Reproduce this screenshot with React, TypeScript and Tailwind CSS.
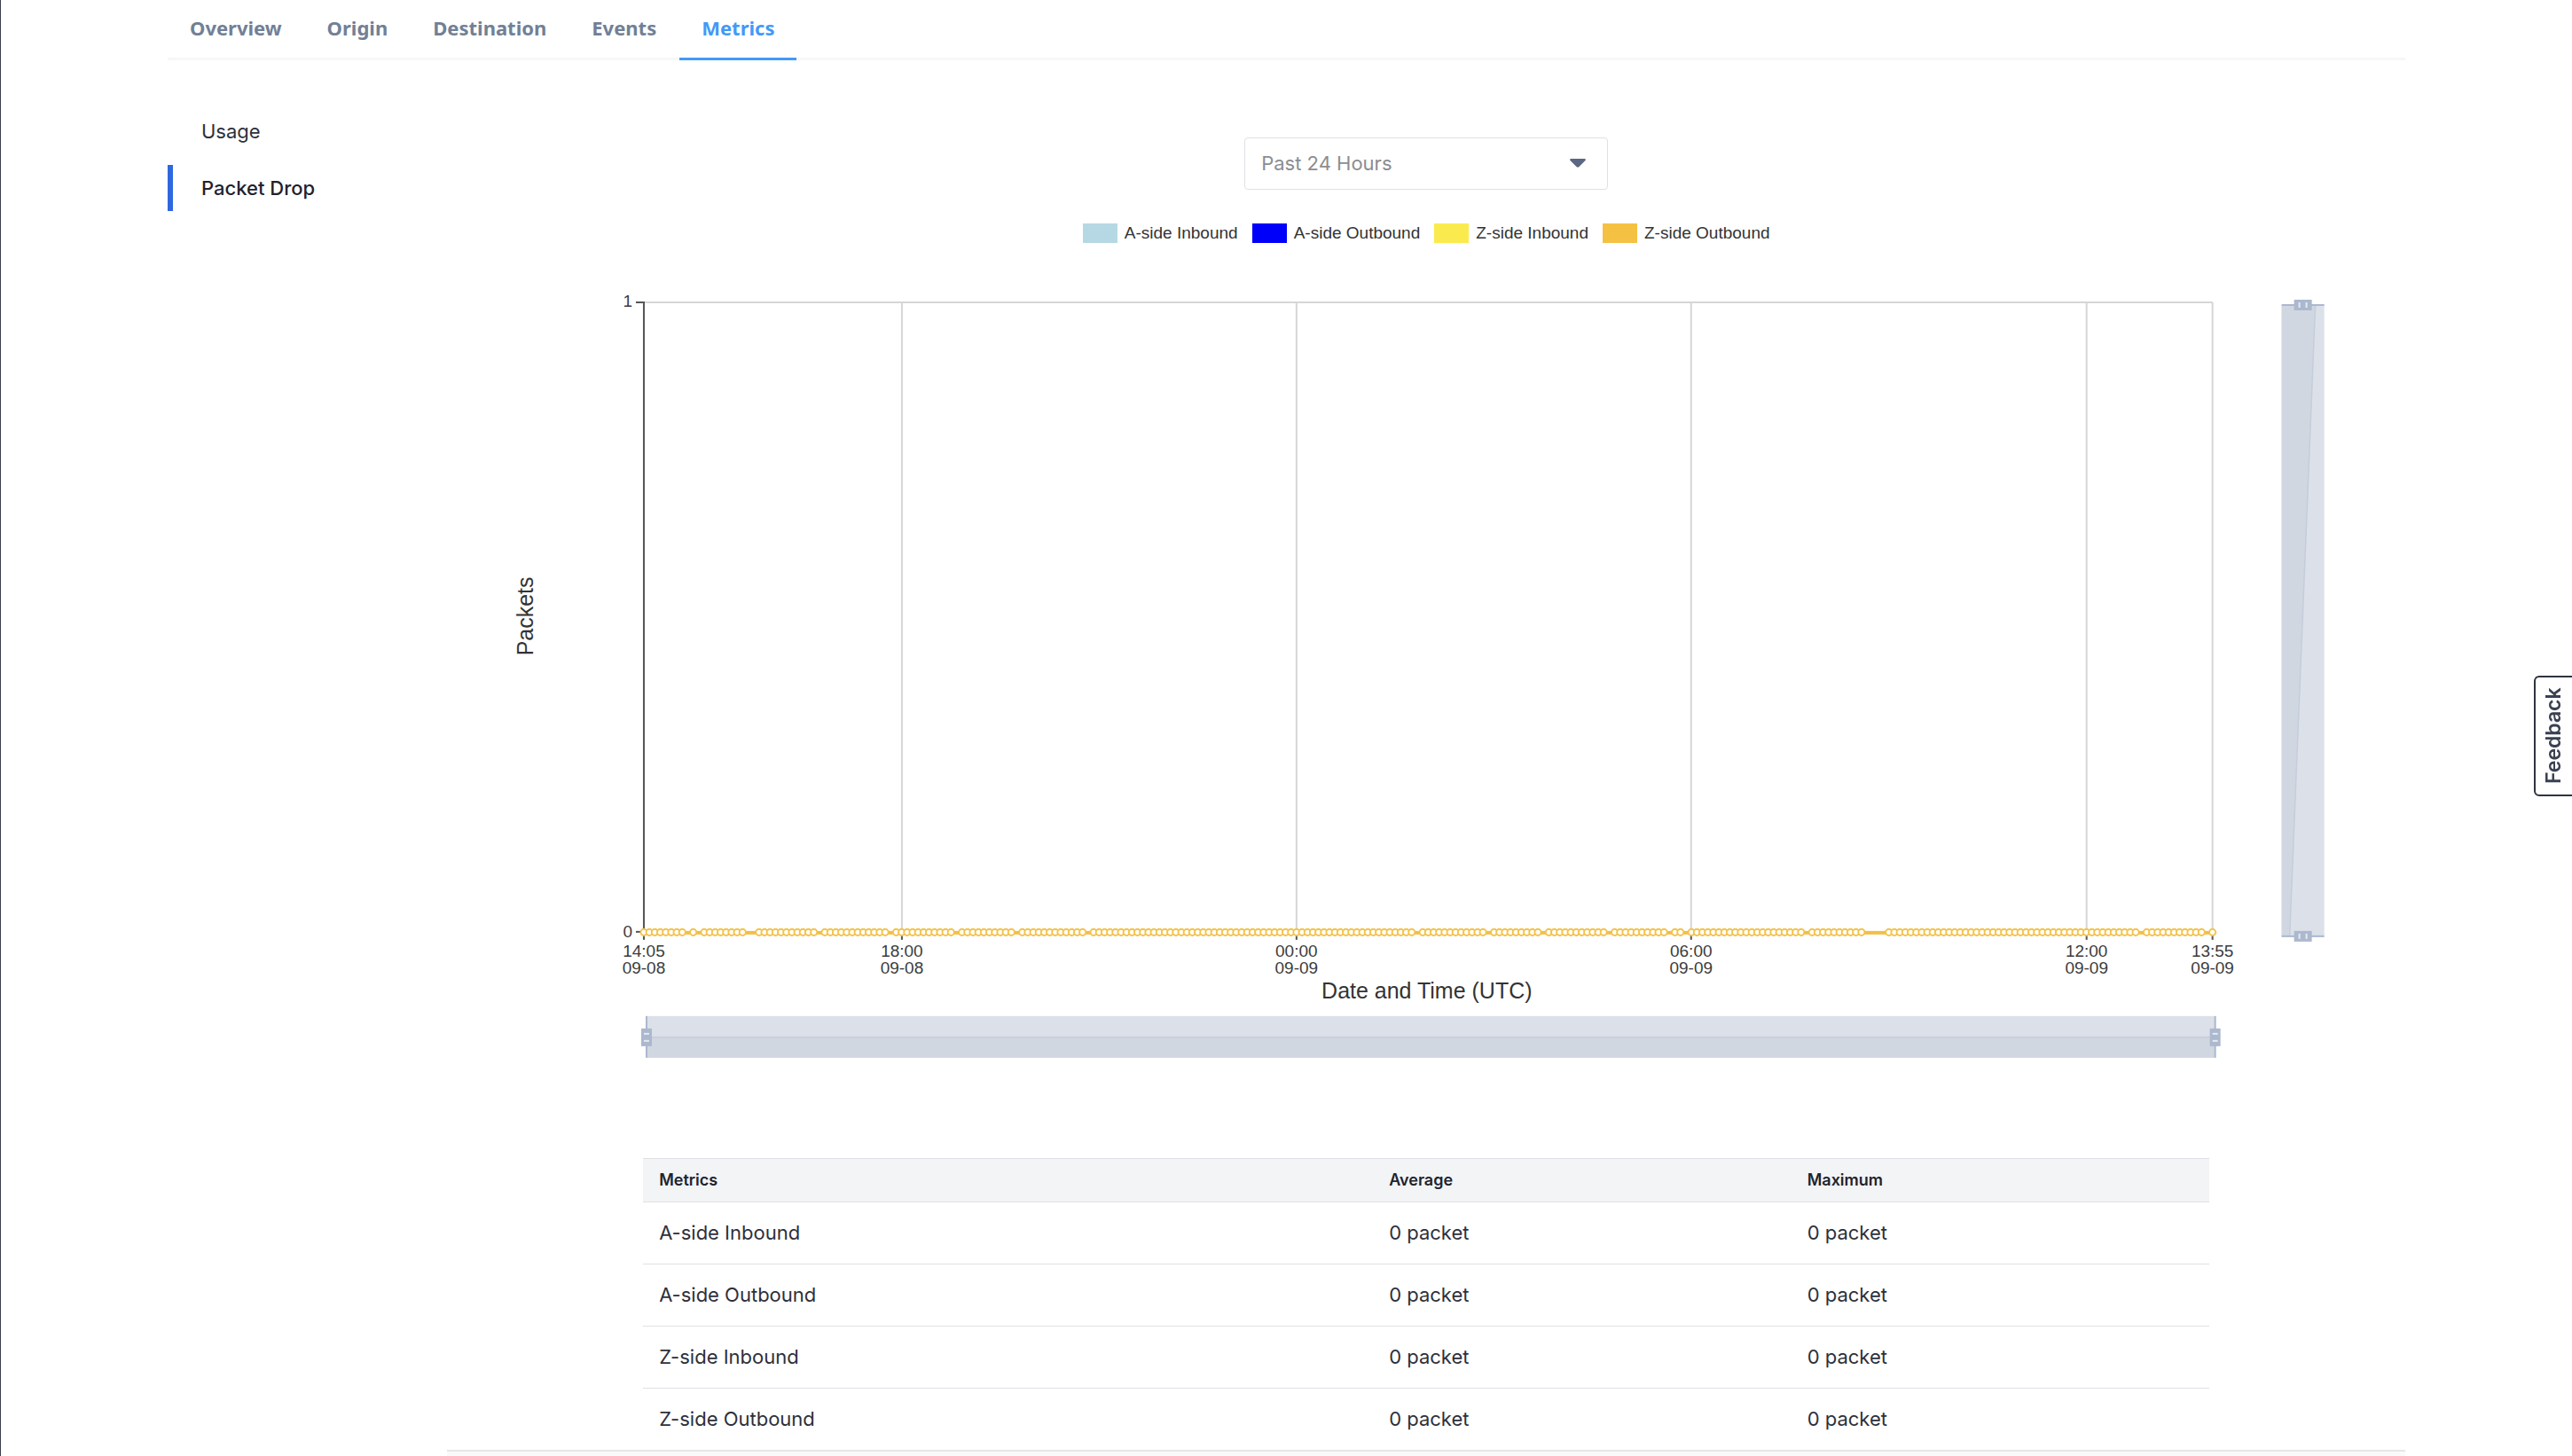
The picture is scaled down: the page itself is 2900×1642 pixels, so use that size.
import React from "react";

const TABS = ["Overview", "Origin", "Destination", "Events", "Metrics"];
const SECTIONS = ["Usage", "Packet Drop"];

const SERIES = [
  { name: "A-side Inbound", swatch: "bg-[#b6d8e4]" },
  { name: "A-side Outbound", swatch: "bg-[#0000fa]" },
  { name: "Z-side Inbound", swatch: "bg-[#fbea4e]" },
  { name: "Z-side Outbound", swatch: "bg-[#f5c142]" },
];

// Plot geometry, in view box units
const LEFT = 726;
const RIGHT = 2495;
const TOP = 341;
const BOTTOM = 1051;

// One sample every five minutes; these indices carry no sample
const SAMPLES = 286;
const MISSING = new Set([
  8, 10, 19, 20, 32, 45, 57, 68, 81, 141, 154, 164, 176, 187, 190, 212, 223,
  224, 225, 226, 273, 285,
]);
const sampleX = (i: number) => LEFT + (i * (RIGHT - LEFT)) / SAMPLES;
const POINTS = Array.from({ length: SAMPLES + 1 }, (_, i) => i).filter(
  (i) => !MISSING.has(i),
);

const TICKS = [
  { i: 0, time: "14:05", date: "09-08" },
  { i: 47, time: "18:00", date: "09-08" },
  { i: 119, time: "00:00", date: "09-09" },
  { i: 191, time: "06:00", date: "09-09" },
  { i: 263, time: "12:00", date: "09-09" },
  { i: 286, time: "13:55", date: "09-09" },
];

function SideHandle({ x }: { x: number }) {
  return (
    <g>
      <rect x={x - 1} y="1146" width="2" height="47" fill="#abb8ce" />
      <rect x={x - 6} y="1160" width="12" height="20" fill="#abb8ce" />
      <rect x={x - 3} y="1165" width="6" height="2" fill="#e6eaf1" />
      <rect x={x - 3} y="1173" width="6" height="2" fill="#e6eaf1" />
    </g>
  );
}

function EndHandle({ y }: { y: number }) {
  return (
    <g>
      <rect x="2573" y={y - 1} width="48" height="2" fill="#abb8ce" />
      <rect x="2587" y={y - 6} width="20" height="12" fill="#abb8ce" />
      <rect x="2592" y={y - 3} width="2" height="6" fill="#e6eaf1" />
      <rect x="2600" y={y - 3} width="2" height="6" fill="#e6eaf1" />
    </g>
  );
}

function PacketChart() {
  return (
    <svg
      viewBox="504 320 2208 880"
      className="block w-full font-['Liberation_Sans',Arial,sans-serif]"
      role="img"
      aria-label="Packets by date and time"
    >
      <rect x={LEFT} y={TOP - 1} width={RIGHT - LEFT} height="2" fill="#d6d6d6" />
      {TICKS.slice(1).map((t) => (
        <rect
          key={t.i}
          x={Math.round(sampleX(t.i)) - 1}
          y={TOP}
          width="2"
          height={BOTTOM - TOP}
          fill="#d6d6d6"
        />
      ))}
      <rect x={LEFT - 1} y={TOP - 1} width="2" height={BOTTOM - TOP} fill="#555" />
      {[TOP, BOTTOM].map((y) => (
        <rect key={y} x={LEFT - 9} y={y - 1} width="8" height="2" fill="#555" />
      ))}
      <g fill="#3c3c3c" fontSize="19">
        <text x="713" y="346" textAnchor="end">1</text>
        <text x="713" y="1057" textAnchor="end">0</text>
        {TICKS.map((t) => (
          <g key={t.i} textAnchor="middle">
            <rect x={Math.round(sampleX(t.i)) - 1} y={BOTTOM} width="2" height="9" fill="#555" />
            <text x={Math.round(sampleX(t.i))} y="1079">{t.time}</text>
            <text x={Math.round(sampleX(t.i))} y="1098">{t.date}</text>
          </g>
        ))}
      </g>
      <g fill="#333" fontSize="25" textAnchor="middle">
        <text x="1609" y="1126">Date and Time (UTC)</text>
        <text transform="translate(601 695) rotate(-90)">Packets</text>
      </g>

      <rect x={LEFT} y={BOTTOM - 1} width={RIGHT - LEFT} height="4" fill="#f2bf45" />
      {POINTS.map((i) => (
        <circle key={i} cx={sampleX(i)} cy={BOTTOM + 0.5} r="3.6" fill="#fff" stroke="#f3c24a" strokeWidth="1.9" />
      ))}

      <rect x="729" y="1146" width="1769" height="47" fill="#dce0e9" />
      <rect x="729" y="1170" width="1769" height="23" fill="#d1d7e0" />
      <rect x="729" y="1169" width="1769" height="2" fill="#c8d0dc" />
      <SideHandle x={729} />
      <SideHandle x={2498} />

      <rect x="2573" y="344" width="48" height="712" fill="#dce0e9" />
      <path d="M2573 344H2611L2582 1056H2573Z" fill="#d1d7e0" />
      <path d="M2611 344L2582 1056" stroke="#c5cddb" strokeWidth="1.5" />
      <EndHandle y={344} />
      <EndHandle y={1056} />
    </svg>
  );
}

export default function App() {
  return (
    <div className="flex min-h-screen flex-col border-l border-[#3a3d4d] bg-white px-[188px] font-['Inter',sans-serif] text-[#2d303b]">
      <nav className="flex gap-px border-b-[3px] border-[#f7f7f7] font-['Noto_Sans','Open_Sans',sans-serif] text-[22px] leading-[30px] font-bold">
        {TABS.map((tab) => (
          <a
            key={tab}
            href={"#" + tab.toLowerCase()}
            aria-current={tab === "Metrics" ? "page" : undefined}
            className={
              tab === "Metrics"
                ? "-mb-[3px] border-b-[3px] border-[#4299f7] px-[25px] pt-4 pb-[19px] text-[#4299f7]"
                : "px-[25px] pt-4 pb-[19px] text-[#718096]"
            }
          >
            {tab}
          </a>
        ))}
      </nav>

      <div className="grid grow grid-cols-[1fr_7fr]">
        <aside className="flex flex-col gap-3 pt-[54px] text-[22px] leading-[52px]">
          {SECTIONS.map((s) => (
            <a
              key={s}
              href={"#" + s.toLowerCase().replace(" ", "-")}
              className={
                s === "Packet Drop"
                  ? "border-l-[6px] border-[#2f68de] pl-8 font-medium text-[#20232e]"
                  : "border-l-[6px] border-transparent pl-8"
              }
            >
              {s}
            </a>
          ))}
        </aside>

        <main className="flex flex-col pt-[87px]">
          <div className="relative mx-auto w-[410px]">
            <select
              aria-label="Time range"
              className="block h-[59px] w-full appearance-none rounded-sm border border-[#dfe1e4] bg-white px-[18px] text-[22px] text-[#8c8d92]"
            >
              <option>Past 24 Hours</option>
            </select>
            <svg viewBox="0 0 18 10" className="pointer-events-none absolute top-6 right-[25px] w-[18px]">
              <path d="M1 0H17Q18.500 .5 17.500 2L10.500 9Q9 10.500 7.500 9L.5 2Q-.5 .5 1 0Z" fill="#5b6784" />
            </svg>
          </div>

          <div className="mt-[37px] flex justify-center gap-4 font-['Liberation_Sans',Arial,sans-serif] text-[19px] leading-[24px] text-[#333]">
            {SERIES.map((s) => (
              <button key={s.name} type="button" className="flex items-center gap-2">
                <span className={"h-[22px] w-[39px] " + s.swatch} />
                {s.name}
              </button>
            ))}
          </div>

          <div className="mt-[45px]">
            <PacketChart />
          </div>

          <table className="mx-auto mt-[106px] w-4/5 table-fixed border-collapse text-left">
            <thead>
              <tr className="h-[49px] border-y border-[#dfe1e5] bg-[#f2f4f6] text-[18px] leading-6 text-[#20232e]">
                <th scope="col" className="px-[18px] font-semibold">Metrics</th>
                <th scope="col" className="w-[26.7%] px-[18px] font-semibold">Average</th>
                <th scope="col" className="w-[26.7%] px-[18px] font-semibold">Maximum</th>
              </tr>
            </thead>
            <tbody className="text-[22px] leading-[30px]">
              {SERIES.map((s) => (
                <tr key={s.name} className="border-b border-[#dfe1e5] last:border-0">
                  <td className="px-[18px] pt-[19px] pb-5">{s.name}</td>
                  <td className="px-[18px] pt-[19px] pb-5">0 packet</td>
                  <td className="px-[18px] pt-[19px] pb-5">0 packet</td>
                </tr>
              ))}
            </tbody>
          </table>
          <div className="grow border-t-2 border-[#e6e6e6] bg-[#fafafa]" />
        </main>
      </div>

      <button
        type="button"
        className="fixed top-[762px] right-0 flex h-[136px] w-[43px] rotate-180 items-center justify-center rounded-r-md border-2 border-l-0 border-[#2d3442] bg-white text-[23px] font-semibold text-[#3a4150] [writing-mode:vertical-rl]"
      >
        Feedback
      </button>
    </div>
  );
}
